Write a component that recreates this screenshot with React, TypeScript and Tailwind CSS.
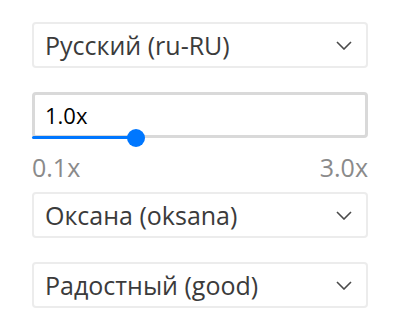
import React, { useState } from 'react';

const Chevron = () => (
  <svg width="16" height="9" viewBox="0 0 16 9" fill="none" className="shrink-0">
    <path d="M1 1l7 7 7-7" stroke="#4a4a4a" strokeWidth="1.6" />
  </svg>
);

const SelectBox = ({ label }: { label: string }) => (
  <div className="flex h-[46px] items-center justify-between rounded-[4px] border-2 border-[#ececec] bg-white pl-[11px] pr-[14px]">
    <span className="text-[25px] leading-[30px] text-[#3b3b3b]">{label}</span>
    <Chevron />
  </div>
);

const App = () => {
  const [rate] = useState(1.0);
  const min = 0.1;
  const max = 3.0;
  const pct = ((rate - min) / (max - min)) * 100;

  return (
    <div className="min-h-[334px] bg-white pt-[22px] pl-[32px] w-[368px] font-['Open_Sans',sans-serif]">
      <SelectBox label="Русский (ru-RU)" />

      {/* Rate input with slider */}
      <div className="relative mt-[24px]">
        <div className="flex h-[46px] items-center rounded-[4px] border-[3px] border-[#d9d9d9] pl-[10px]">
          <span className="text-[22px] leading-[30px] text-black">{rate.toFixed(1)}x</span>
        </div>
        <div className="absolute left-0 right-0 bottom-[-1px] h-[3px]">
          <div className="h-full rounded-full bg-[#0077ff]" style={{ width: `${pct}%` }} />
          <div
            className="absolute top-1/2 h-[18px] w-[18px] -translate-x-1/2 -translate-y-1/2 rounded-full bg-[#0077ff]"
            style={{ left: `${pct}%` }}
          />
        </div>
      </div>

      <div className="mt-[14px] flex justify-between text-[25px] leading-[30px] text-[#8a8a8a]">
        <span>0.1x</span>
        <span>3.0x</span>
      </div>

      <div className="mt-[10px]">
        <SelectBox label="Оксана (oksana)" />
      </div>
      <div className="mt-[24px]">
        <SelectBox label="Радостный (good)" />
      </div>
    </div>
  );
};

export default App;
